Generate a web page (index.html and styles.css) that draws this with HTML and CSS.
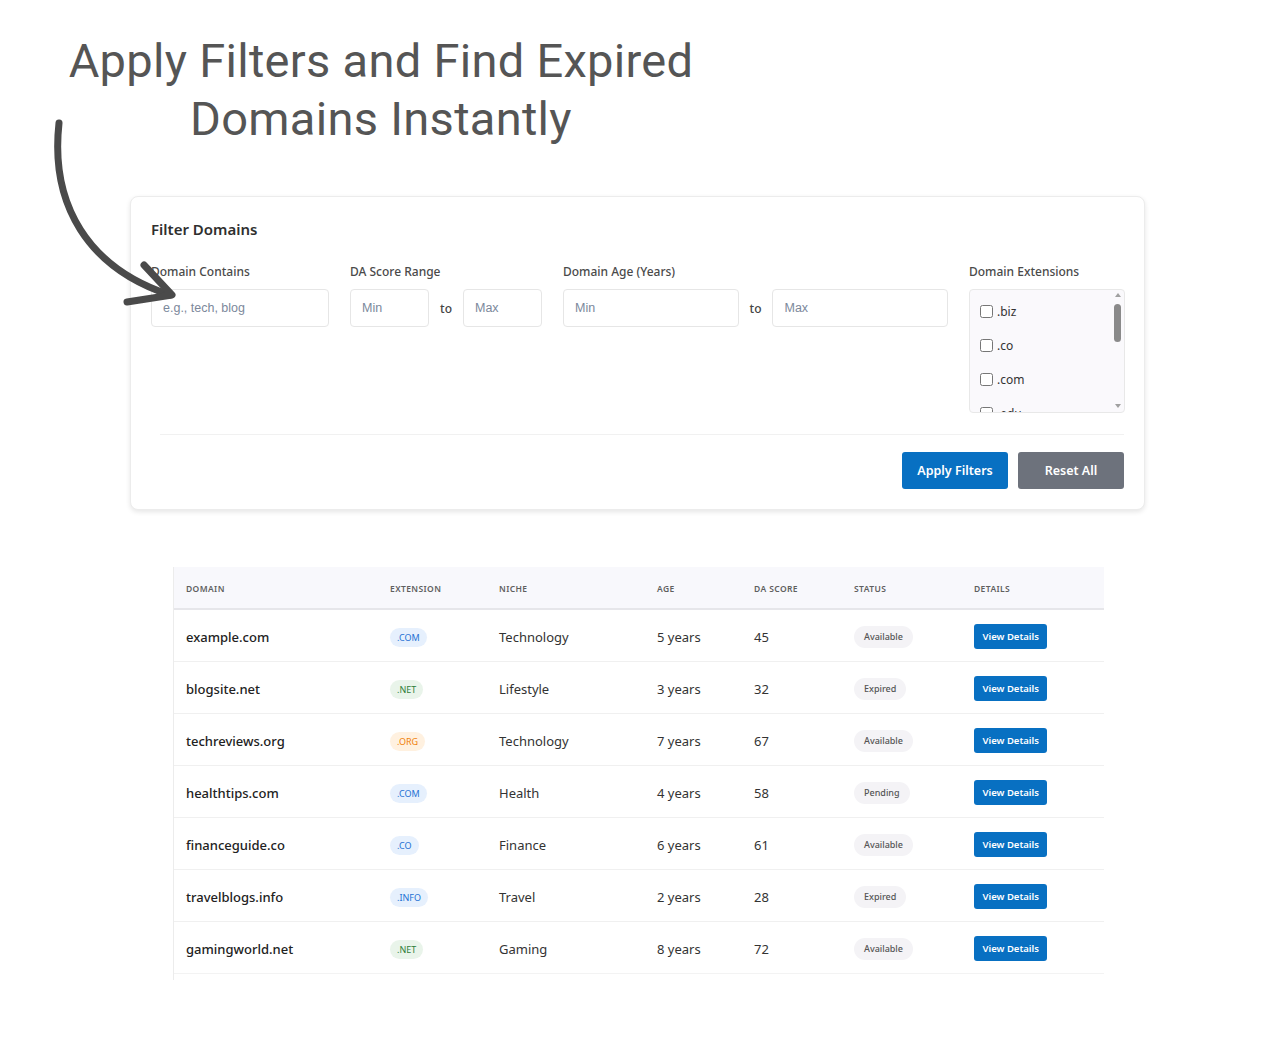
FILE: index.html
```html
<!DOCTYPE html>
<html lang="en">
<head>
<meta charset="utf-8">
<title>Filter Domains</title>
<link rel="stylesheet" href="styles.css">
</head>
<body>
<div class="page">
  <svg class="arrow" width="200" height="320" viewBox="0 0 200 320" aria-hidden="true">
    <path d="M59 123 C50 205 88 268 170 295" fill="none" stroke="#4a4a4a" stroke-width="7" stroke-linecap="round"/>
    <path d="M144 265 L172 295 L127 302" fill="none" stroke="#4a4a4a" stroke-width="7" stroke-linecap="round" stroke-linejoin="round"/>
  </svg>

  <h1 class="headline">Apply Filters and Find Expired<br>Domains Instantly</h1>

  <section class="card">
    <h2 class="card-title">Filter Domains</h2>
    <div class="filters">
      <div class="field">
        <label class="label">Domain Contains</label>
        <input class="input" type="text" placeholder="e.g., tech, blog">
      </div>
      <div class="field">
        <label class="label">DA Score Range</label>
        <div class="range">
          <input class="input" type="text" placeholder="Min">
          <span class="to">to</span>
          <input class="input" type="text" placeholder="Max">
        </div>
      </div>
      <div class="field">
        <label class="label">Domain Age (Years)</label>
        <div class="range">
          <input class="input" type="text" placeholder="Min">
          <span class="to">to</span>
          <input class="input" type="text" placeholder="Max">
        </div>
      </div>
      <div class="field">
        <label class="label">Domain Extensions</label>
        <div class="ext-box">
          <div class="ext-list">
            <label class="ext-item"><input type="checkbox"> .biz</label>
            <label class="ext-item"><input type="checkbox"> .co</label>
            <label class="ext-item"><input type="checkbox"> .com</label>
            <label class="ext-item"><input type="checkbox"> .edu</label>
          </div>
          <div class="scrollbar">
            <span class="sb-up"></span>
            <span class="sb-thumb"></span>
            <span class="sb-fill"></span>
            <span class="sb-down"></span>
          </div>
        </div>
      </div>
    </div>
    <hr class="divider">
    <div class="actions">
      <button class="btn btn-primary">Apply Filters</button>
      <button class="btn btn-secondary">Reset All</button>
    </div>
  </section>

  <div class="table-wrap">
    <table class="domains">
      <colgroup>
        <col class="c-domain"><col class="c-ext"><col class="c-niche"><col class="c-age"><col class="c-da"><col class="c-status"><col class="c-details">
      </colgroup>
      <thead>
        <tr><th>Domain</th><th>Extension</th><th>Niche</th><th>Age</th><th>DA Score</th><th>Status</th><th>Details</th></tr>
      </thead>
      <tbody>
        <tr><td class="dom">example.com</td><td><span class="ext ext-blue">.COM</span></td><td>Technology</td><td>5 years</td><td>45</td><td><span class="status">Available</span></td><td><button class="view">View Details</button></td></tr>
        <tr><td class="dom">blogsite.net</td><td><span class="ext ext-green">.NET</span></td><td>Lifestyle</td><td>3 years</td><td>32</td><td><span class="status">Expired</span></td><td><button class="view">View Details</button></td></tr>
        <tr><td class="dom">techreviews.org</td><td><span class="ext ext-orange">.ORG</span></td><td>Technology</td><td>7 years</td><td>67</td><td><span class="status">Available</span></td><td><button class="view">View Details</button></td></tr>
        <tr><td class="dom">healthtips.com</td><td><span class="ext ext-blue">.COM</span></td><td>Health</td><td>4 years</td><td>58</td><td><span class="status">Pending</span></td><td><button class="view">View Details</button></td></tr>
        <tr><td class="dom">financeguide.co</td><td><span class="ext ext-blue">.CO</span></td><td>Finance</td><td>6 years</td><td>61</td><td><span class="status">Available</span></td><td><button class="view">View Details</button></td></tr>
        <tr><td class="dom">travelblogs.info</td><td><span class="ext ext-blue">.INFO</span></td><td>Travel</td><td>2 years</td><td>28</td><td><span class="status">Expired</span></td><td><button class="view">View Details</button></td></tr>
        <tr><td class="dom">gamingworld.net</td><td><span class="ext ext-green">.NET</span></td><td>Gaming</td><td>8 years</td><td>72</td><td><span class="status">Available</span></td><td><button class="view">View Details</button></td></tr>
      </tbody>
    </table>
  </div>
</div>
</body>
</html>
```

FILE: styles.css
```css
* { box-sizing: border-box; }
html, body { margin: 0; padding: 0; background: #ffffff; }
body { font-family: "Noto Sans", "Open Sans", sans-serif; color: #333; }

.page { position: relative; width: 1280px; min-height: 1040px; padding-top: 32px; }

.arrow { position: absolute; left: 0; top: 0; pointer-events: none; z-index: 2; }

.headline {
  margin: 0;
  width: 762px;
  text-align: center;
  font-family: Roboto, "Liberation Sans", sans-serif;
  font-weight: 400;
  font-size: 47px;
  line-height: 58px;
  letter-spacing: 0.3px;
  color: #555555;
}

.card {
  margin: 48px 0 0 130px;
  width: 1015px;
  background: #fff;
  border: 1px solid #ececec;
  border-radius: 8px;
  box-shadow: 0 2px 5px rgba(0,0,0,0.10);
  padding: 21px 20px 20px 20px;
}
.card-title { margin: 0 0 24px; font-size: 15px; font-weight: 600; color: #2f2f2f; line-height: 22px; }

.filters { display: grid; grid-template-columns: 178px 192px 385px 156px; column-gap: 21px; }
.field { display: flex; flex-direction: column; }
.label { font-size: 12px; font-weight: 500; color: #4a4a4a; line-height: 16px; margin-bottom: 9px; }
.input {
  height: 38px; width: 100%; min-width: 0;
  border: 1px solid #e6e6e6; border-radius: 4px;
  padding: 0 11px;
  font-family: "Liberation Sans", Arial, sans-serif; font-size: 12.5px; color: #333;
  background: #fff; outline: none;
}
.input::placeholder { color: #7c889b; }
.range { display: flex; align-items: center; gap: 11px; }
.range .input { flex: 1; }
.to { font-size: 12px; font-weight: 500; color: #444; }

.ext-box {
  height: 124px; display: flex;
  background: #faf9fc; border: 1px solid #e8e8e8; border-radius: 4px; overflow: hidden;
}
.ext-list { flex: 1; padding: 11px 0 0 7px; display: flex; flex-direction: column; gap: 14px; overflow: hidden; }
.ext-item { display: flex; align-items: center; gap: 1px; height: 20px; font-size: 12px; color: #333; flex-shrink: 0; }
.ext-item input { margin: 0 3px 0 3px; width: 13px; height: 13px; }

.scrollbar { width: 13px; display: flex; flex-direction: column; align-items: center; padding: 3px 0 4px; }
.sb-up, .sb-down { width: 0; height: 0; border-left: 3.5px solid transparent; border-right: 3.5px solid transparent; }
.sb-up { border-bottom: 4px solid #a0a0a0; }
.sb-down { border-top: 4px solid #a0a0a0; }
.sb-thumb { width: 7px; height: 38px; background: #8a8a8a; border-radius: 4px; margin-top: 7px; }
.sb-fill { flex: 1; }

.divider { border: 0; border-top: 1px solid #f1f1f1; margin: 21px 0 17px 9px; }

.actions { display: flex; justify-content: flex-end; gap: 10px; }
.btn {
  height: 37px; width: 106px; border: 0; border-radius: 3px;
  font-family: "Noto Sans", "Open Sans", sans-serif; font-size: 12.5px; font-weight: 600; color: #fff;
}
.btn-primary { background: #0870c2; }
.btn-secondary { background: #6d727c; }

.table-wrap { margin: 57px 0 0 173px; width: 930px; border-left: 1px solid #ececec; padding-bottom: 6px; }
.domains { width: 930px; table-layout: fixed; border-collapse: collapse; }
.c-domain { width: 204px; } .c-ext { width: 109px; } .c-niche { width: 158px; } .c-age { width: 97px; }
.c-da { width: 100px; } .c-status { width: 120px; } .c-details { width: 142px; }

.domains th {
  height: 42px; background: #f8f8fc; text-align: left; padding: 1px 0 0 12px;
  font-size: 8.5px; font-weight: 600; letter-spacing: 0.4px; text-transform: uppercase; color: #5f5f5f;
  border-bottom: 2px solid #e6e6ea;
}
.domains td {
  height: 52px; padding: 3px 0 0 12px; font-size: 13px; color: #333;
  border-bottom: 1px solid #f0f0f0; vertical-align: middle;
}
.domains tbody tr:last-child td { border-bottom: 1px solid #f3f3f3; }
.domains td.dom { font-weight: 500; color: #222; }

.ext { display: inline-block; vertical-align: middle; height: 19px; line-height: 19px; padding: 0 7px; border-radius: 10px; font-size: 9px; }
.ext-blue { background: #e6f0fd; color: #2570d4; }
.ext-green { background: #e9f4ea; color: #2f7d38; }
.ext-orange { background: #fff1e0; color: #f07f0a; }

.status { display: inline-block; vertical-align: middle; height: 22px; line-height: 22px; padding: 0 10px; border-radius: 11px; background: #f4f3f6; color: #555; font-size: 9px; font-weight: 500; }

.view {
  vertical-align: middle;
  height: 25px; padding: 0 8.5px; border: 0; border-radius: 3px; background: #0870c2; color: #fff;
  font-family: "Noto Sans", "Open Sans", sans-serif; font-size: 9.5px; font-weight: 600;
}
```
